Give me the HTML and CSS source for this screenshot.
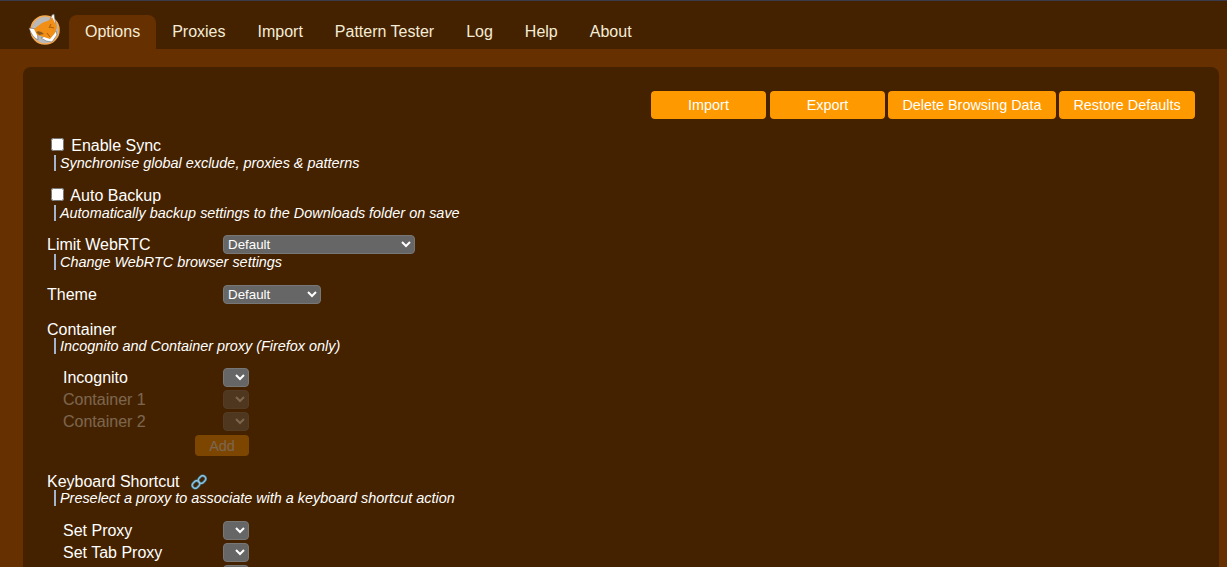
FILE: index.html
```html
<!DOCTYPE html>
<html lang="en">
<head>
    <meta charset="UTF-8">
    <title>FoxyProxy Options</title>
    <link rel="stylesheet" href="styles.css">
</head>
<body>
    <nav class="tabs">
        <svg class="logo" viewBox="0 0 34 34" width="34" height="34">
            <circle cx="17" cy="17" r="14" fill="#b9b9b9" stroke="#f6a94e" stroke-width="1.6"/>
            <path d="M1 15 L9 16 L10 27 Q4 24 1 15 Z" fill="#fff" stroke="#666" stroke-width=".6"/>
            <path d="M21 9 L24 2 L26 1 L28 13 Z" fill="#fff" stroke="#666" stroke-width=".6"/>
            <path d="M13 25 L28 18 L29 22 L24 29 Q18 29 13 25 Z" fill="#fff" stroke="#666" stroke-width=".6"/>
            <path d="M6 16 L14 10 L22 7 L24 4 L29 14 L27 20 L22 26 L16 24 L9 22 Z" fill="#f28f16"/>
            <path d="M8 19 Q12 17 16 21 L11 22 Z" fill="#8a5a1c"/>
            <path d="M21 15 L23 11 M22 14 L26 15 M19 20 L22 24" stroke="#a85c08" stroke-width="1" fill="none"/>
        </svg>
        <a class="tab active">Options</a>
        <a class="tab">Proxies</a>
        <a class="tab">Import</a>
        <a class="tab">Pattern Tester</a>
        <a class="tab">Log</a>
        <a class="tab">Help</a>
        <a class="tab">About</a>
    </nav>

    <main class="card">
        <div class="actions">
            <button class="wide">Import</button>
            <button class="wide">Export</button>
            <button class="delete">Delete Browsing Data</button>
            <button class="restore">Restore Defaults</button>
        </div>

        <section class="group check">
            <label><input type="checkbox"> Enable Sync</label>
            <p class="desc">Synchronise global exclude, proxies &amp; patterns</p>
        </section>

        <section class="group check">
            <label><input type="checkbox"> Auto Backup</label>
            <p class="desc">Automatically backup settings to the Downloads folder on save</p>
        </section>

        <section class="group">
            <div class="row webrtc">
                <label>Limit WebRTC</label>
                <select class="long"><option>Default</option></select>
            </div>
            <p class="desc">Change WebRTC browser settings</p>
        </section>

        <section class="group theme">
            <div class="row">
                <label>Theme</label>
                <select class="medium"><option>Default</option></select>
            </div>
        </section>

        <section class="group container">
            <div class="row head"><label>Container</label></div>
            <p class="desc">Incognito and Container proxy (Firefox only)</p>
            <div class="sub">
                <div class="row"><label>Incognito</label><select><option></option></select></div>
                <div class="row off"><label>Container 1</label><select disabled><option></option></select></div>
                <div class="row off"><label>Container 2</label><select disabled><option></option></select></div>
                <button class="add" disabled>Add</button>
            </div>
        </section>

        <section class="group shortcut">
            <div class="row head">
                <label>Keyboard Shortcut
                    <svg class="link" viewBox="0 0 16 16" width="16" height="16">
                        <g fill="none" stroke="#3f7f9f" stroke-width="2.6">
                            <rect x="8" y="1.5" width="6" height="8" rx="3" transform="rotate(45 11 5.5)"/>
                            <rect x="2" y="6.5" width="6" height="8" rx="3" transform="rotate(45 5 10.5)"/>
                        </g>
                        <g fill="none" stroke="#9ccbe0" stroke-width="1">
                            <rect x="8" y="1.5" width="6" height="8" rx="3" transform="rotate(45 11 5.5)"/>
                            <rect x="2" y="6.5" width="6" height="8" rx="3" transform="rotate(45 5 10.5)"/>
                        </g>
                    </svg>
                </label>
            </div>
            <p class="desc">Preselect a proxy to associate with a keyboard shortcut action</p>
            <div class="sub">
                <div class="row"><label>Set Proxy</label><select><option></option></select></div>
                <div class="row"><label>Set Tab Proxy</label><select><option></option></select></div>
                <div class="row"><label></label><select><option></option></select></div>
            </div>
        </section>
    </main>
</body>
</html>
```

FILE: styles.css
```css
html,
body {
    height: 567px;
    overflow: hidden;
}

body {
    margin: 0;
    background-color: #663000;
    color: #fff;
    font-family: "Liberation Sans", Arial, sans-serif;
    font-size: 16px;
}

.tabs {
    display: flex;
    align-items: flex-end;
    height: 48px;
    padding-left: 28px;
    background-color: #442200;
    border-top: 1px solid #3a3a4a;
}

.logo {
    margin: 0 7px 2px 0;
    width: 34px;
    height: 34px;
}

.tab {
    height: 34px;
    padding: 0 16px;
    line-height: 33px;
    color: #f5ecd7;
    border-radius: 8px 8px 0 0;
}

.tab.active {
    background-color: #663000;
}

.card {
    margin: 18px 8px 0 23px;
    padding: 24px;
    background-color: #442200;
    border-radius: 8px;
}

.actions {
    display: flex;
    justify-content: flex-end;
    gap: 3px;
    margin-bottom: 18px;
}

button {
    height: 28px;
    padding: 0;
    font-family: inherit;
    font-size: 14.4px;
    color: #fff;
    background-color: #ff9900;
    border: none;
    border-radius: 4px;
}

button.wide {
    width: 115px;
}

button.wide:first-child {
    margin-right: 1px;
}

button.delete {
    width: 168px;
}

button.restore {
    width: 136px;
}

.group {
    margin-bottom: 14px;
}

.check {
    margin-bottom: 16px;
    padding-left: 4px;
}

.check + .check {
    margin-bottom: 13px;
}

.theme,
.container {
    margin-bottom: 15px;
}

.check input {
    width: 13px;
    height: 13px;
    margin: 0 2.8px 0 0;
}

.desc {
    margin: 0 0 0 7px;
    padding-left: 4px;
    border-left: 2px solid #a3b4d0;
    font-size: 14.42px;
    font-style: italic;
    line-height: 16px;
}

.check .desc {
    margin-left: 3px;
}

.row {
    display: flex;
    align-items: center;
    height: 20px;
}

.row.head {
    align-items: flex-start;
    height: 19px;
}

.row.webrtc {
    align-items: flex-start;
}

.webrtc select {
    margin-top: 1px;
}

.row label {
    width: 176px;
    padding-top: 2px;
}

select {
    width: 26px;
    height: 19px;
    padding: 0;
    font-family: inherit;
    font-size: 13.33px;
    color: #fff;
    background-color: #666;
    border: 1px solid #777;
    border-radius: 4px;
}

select:disabled {
    opacity: 1;
}

select.long {
    width: 192px;
}

select.medium {
    width: 98px;
}

.sub {
    padding: 12px 0 0 16px;
}

.shortcut .sub {
    padding-top: 13px;
}

.sub .row {
    height: 22px;
}

.sub .row label {
    width: 160px;
}

.off {
    opacity: 0.3;
}

.add {
    display: block;
    width: 54px;
    height: 21px;
    margin: 3px 0 0 132px;
    opacity: 0.3;
}

.link {
    margin-left: 7px;
    vertical-align: -3px;
}
```
